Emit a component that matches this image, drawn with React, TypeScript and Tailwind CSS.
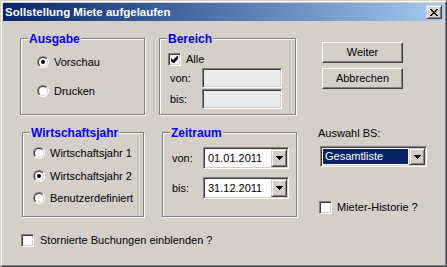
import React from 'react';
import clsx from 'clsx';

const font = "font-['Liberation_Sans',Arial,sans-serif]";

// classic 3d edges
const sunken =
  'border border-t-[#808080] border-l-[#808080] border-b-white border-r-white shadow-[inset_1px_1px_0_#404040,inset_-1px_-1px_0_#d4d0c8]';
const raisedBtn =
  'border border-t-white border-l-white border-b-[#404040] border-r-[#404040] shadow-[inset_-1px_-1px_0_#808080]';
const raisedSmall =
  'border border-t-[#d4d0c8] border-l-[#d4d0c8] border-b-[#404040] border-r-[#404040] shadow-[inset_1px_1px_0_#fff,inset_-1px_-1px_0_#808080]';

const Radio = ({ checked }: { checked?: boolean }) => (
  <svg width="12" height="12" viewBox="0 0 12 12" className="shrink-0">
    <defs>
      <linearGradient id="rOuter" x1="0" y1="0" x2="1" y2="1">
        <stop offset="0.5" stopColor="#808080" />
        <stop offset="0.5" stopColor="#ffffff" />
      </linearGradient>
      <linearGradient id="rInner" x1="0" y1="0" x2="1" y2="1">
        <stop offset="0.5" stopColor="#404040" />
        <stop offset="0.5" stopColor="#d4d0c8" />
      </linearGradient>
    </defs>
    <circle cx="6" cy="6" r="6" fill="url(#rOuter)" />
    <circle cx="6" cy="6" r="5" fill="url(#rInner)" />
    <circle cx="6" cy="6" r="4" fill="#fff" />
    {checked && <circle cx="6" cy="6" r="2" fill="#000" />}
  </svg>
);

const Checkbox = ({ checked }: { checked?: boolean }) => (
  <div className={clsx('w-[13px] h-[13px] shrink-0 bg-white flex items-center justify-center', sunken)}>
    {checked && (
      <svg width="7" height="7" viewBox="0 0 7 7">
        <polygon points="0,2 2,4 6,0 7,0 7,3 3,7 2,7 0,5" fill="#000" />
      </svg>
    )}
  </div>
);

const DropArrow = () => (
  <div className={clsx('w-[16px] h-full shrink-0 bg-[#d4d0c8] flex items-center justify-center', raisedSmall)}>
    <svg width="7" height="4" viewBox="0 0 7 4">
      <path d="M0 0H7V1H6V2H5V3H4V4H3V3H2V2H1V1H0Z" fill="#000" />
    </svg>
  </div>
);

const Combo = ({ value, className, selected }: { value: string; className?: string; selected?: boolean }) => (
  <div className={clsx('bg-white p-[1px] flex', sunken, className)}>
    <div className="flex-1 flex items-center pl-[1px] pr-[1px] py-[1px]">
      <span
        className={clsx(
          'h-full flex-1 flex items-center pl-[2px]',
          selected ? 'bg-[#0a246a] text-white' : 'text-black'
        )}
      >
        {value}
      </span>
    </div>
    <DropArrow />
  </div>
);

const GroupBox = ({
  title,
  className,
  children,
}: {
  title: string;
  className?: string;
  children?: React.ReactNode;
}) => (
  <div className={clsx('relative border border-[#808080] shadow-[inset_1px_1px_0_#fff,1px_1px_0_#fff]', className)}>
    <span className="absolute left-[7px] top-[-7px] px-[1px] bg-[#d4d0c8] text-[#0000ff] font-bold text-[12px] leading-[14px]">
      {title}
    </span>
    {children}
  </div>
);

const RadioRow = ({ label, checked, className }: { label: string; checked?: boolean; className?: string }) => (
  <div className={clsx('flex items-center gap-[5px] h-[12px]', className)}>
    <Radio checked={checked} />
    <span>{label}</span>
  </div>
);

const CheckRow = ({ label, checked, className }: { label: string; checked?: boolean; className?: string }) => (
  <div className={clsx('flex items-center gap-[5px] h-[13px]', className)}>
    <Checkbox checked={checked} />
    <span>{label}</span>
  </div>
);

const Button = ({ label, className }: { label: string; className?: string }) => (
  <div className={clsx('w-[81px] h-[21px] bg-[#d4d0c8] flex items-center justify-center', raisedBtn, className)}>
    {label}
  </div>
);

export default function App() {
  return (
    <div
      className={clsx(
        'w-[447px] h-[267px] bg-[#d4d0c8] p-[2px] flex flex-col text-[11px] leading-[13px] text-black',
        'border border-t-[#d4d0c8] border-l-[#d4d0c8] border-b-[#404040] border-r-[#404040] shadow-[inset_1px_1px_0_#fff,inset_-1px_-1px_0_#808080]',
        font
      )}
    >
      {/* Title bar */}
      <div className="h-[18px] shrink-0 flex items-center bg-linear-to-r from-[#0a246a] to-[#a6caf0] pl-[2px] pr-[2px]">
        <span className="text-white font-bold text-[11.5px] leading-[14px]">Sollstellung Miete aufgelaufen</span>
        <div className={clsx('ml-auto w-[16px] h-[14px] bg-[#d4d0c8] flex items-center justify-center', raisedSmall)}>
          <svg width="8" height="7" viewBox="0 0 8 7">
            <path
              d="M0 0h2v1h-2z M6 0h2v1h-2z M1 1h2v1h-2z M5 1h2v1h-2z M2 2h4v1h-4z M3 3h2v1h-2z M2 4h4v1h-4z M1 5h2v1h-2z M5 5h2v1h-2z M0 6h2v1h-2z M6 6h2v1h-2z"
              fill="#000"
            />
          </svg>
        </div>
      </div>

      {/* Body */}
      <div className="flex-1 flex flex-col pl-[17px] pt-[17px]">
        <div className="flex items-start">
          {/* Left column */}
          <div className="flex flex-col">
            <GroupBox title="Ausgabe" className="w-[125px] h-[77px]">
              <div className="flex flex-col pl-[16px] pt-[17px] gap-[17px]">
                <RadioRow label="Vorschau" checked />
                <RadioRow label="Drucken" />
              </div>
            </GroupBox>
            <GroupBox title="Wirtschaftsjahr" className="mt-[17px] ml-[2px] w-[122px] h-[85px]">
              <div className="flex flex-col pl-[10px] pt-[14px]">
                <RadioRow label="Wirtschaftsjahr 1" />
                <RadioRow label="Wirtschaftsjahr 2" checked className="mt-[11px]" />
                <RadioRow label="Benutzerdefiniert" className="mt-[10px]" />
              </div>
            </GroupBox>
          </div>

          {/* Middle column */}
          <div className="flex flex-col ml-[14px]">
            <GroupBox title="Bereich" className="w-[137px] h-[77px]">
              <div className="flex flex-col pl-[8px] pt-[14px]">
                <CheckRow label="Alle" checked />
                <div className="flex items-center mt-[2px]">
                  <span className="w-[34px] pl-[2px]">von:</span>
                  <div className={clsx('w-[80px] h-[20px] bg-[#ebebeb]', sunken)} />
                </div>
                <div className="flex items-center mt-[1px]">
                  <span className="w-[34px] pl-[2px]">bis:</span>
                  <div className={clsx('w-[80px] h-[20px] bg-[#ebebeb]', sunken)} />
                </div>
              </div>
            </GroupBox>
            <GroupBox title="Zeitraum" className="mt-[17px] ml-[3px] w-[135px] h-[85px]">
              <div className="flex flex-col pl-[9px] pt-[14px]">
                <div className="flex items-center">
                  <span className="w-[31px]">von:</span>
                  <Combo value="01.01.2011" className="w-[86px] h-[22px]" />
                </div>
                <div className="flex items-center mt-[8px]">
                  <span className="w-[31px]">bis:</span>
                  <Combo value="31.12.2011" className="w-[86px] h-[22px]" />
                </div>
              </div>
            </GroupBox>
          </div>

          {/* Right column */}
          <div className="flex flex-col ml-[21px]">
            <Button label="Weiter" className="ml-[4px] mt-[4px]" />
            <Button label="Abbrechen" className="ml-[4px] mt-[5px]" />
            <span className="mt-[38px]">Auswahl BS:</span>
            <Combo value="Gesamtliste" selected className="mt-[6px] ml-[2px] w-[107px] h-[21px]" />
            <CheckRow label="Mieter-Historie ?" className="mt-[34px] ml-[1px]" />
          </div>
        </div>

        <CheckRow label="Stornierte Buchungen einblenden ?" className="mt-[17px] ml-[1px] gap-[6px]" />
      </div>
    </div>
  );
}
